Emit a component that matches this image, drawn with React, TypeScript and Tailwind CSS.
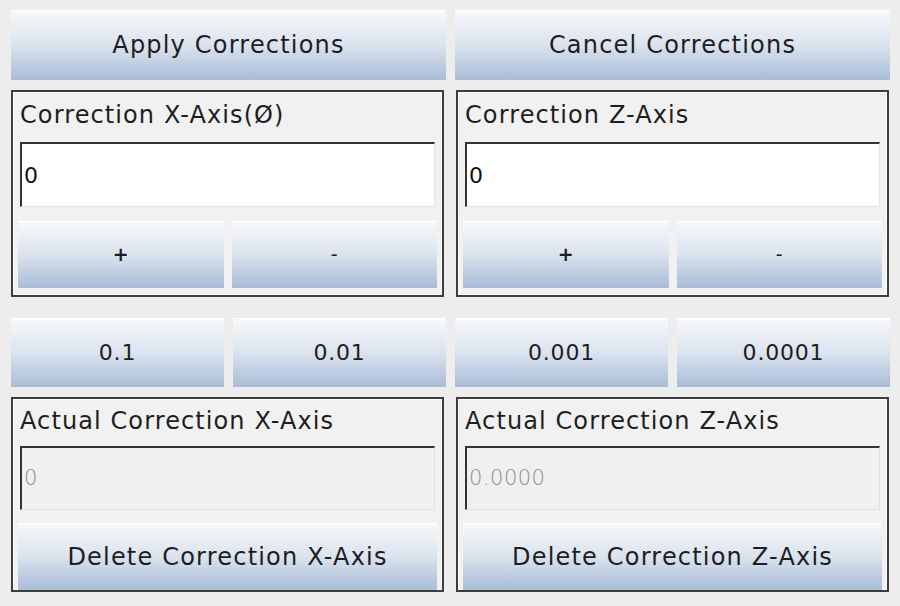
const font = "font-['DejaVu_Sans',sans-serif]";

const Btn = ({
  label,
  className = "",
  text = "text-[24px] tracking-[1.2px]",
}: {
  label: string;
  className?: string;
  text?: string;
}) => (
  <button
    className={`flex items-center justify-center bg-gradient-to-b from-[#f8f9fa] via-[#dbe3ee] to-[#a9bcd7] text-[#1e1e1e] ${text} shadow-[inset_0_1px_0_#fff] ${className}`}
  >
    {label}
  </button>
);

const Panel = ({ children, className = "" }: { children: React.ReactNode; className?: string }) => (
  <div
    className={`flex flex-col border-2 border-[#3d3d3d] bg-[#f1f1f1] shadow-[inset_1px_1px_0_#fff,inset_-1px_-1px_0_#fff] ${className}`}
  >
    {children}
  </div>
);

const CorrectionPanel = ({ title, className }: { title: string; className: string }) => (
  <Panel className={`h-[207px] ${className}`}>
    <div className="h-[44px] flex items-center pl-[7px] pt-[2px] text-[24px] tracking-[1.1px] text-[#1e1e1e]">{title}</div>
    <div className="mx-[7px] mt-[6px] h-[65px] flex items-center bg-white border-t-2 border-l-2 border-[#333] border-b border-r border-b-[#e4e4e4] border-r-[#e4e4e4] pl-[2px] text-[22px] text-[#111]">
      0
    </div>
    <div className="flex gap-[8px] mx-[5px] mt-[14px]">
      <Btn label="+" text="text-[19px] font-bold" className="flex-1 h-[67px]" />
      <Btn label="-" text="text-[19px]" className="flex-1 h-[67px]" />
    </div>
  </Panel>
);

const ActualPanel = ({ title, value, className }: { title: string; value: string; className: string }) => (
  <Panel className={`h-[195px] ${className}`}>
    <div className="h-[44px] flex items-center pl-[7px] pt-[2px] text-[24px] tracking-[1.1px] text-[#1e1e1e]">{title}</div>
    <div className="mx-[7px] mt-[4px] h-[66px] flex items-center bg-[#f0f0f0] border-t-2 border-l-2 border-[#333] border-b border-r border-b-[#e2e2e2] border-r-[#e2e2e2] pl-[2px] text-[21px] font-extralight tracking-[0.5px] text-[#8f8f8f]">
      {value}
    </div>
    <div className="mx-[5px] mt-[13px]">
      <Btn label={`Delete ${title.replace("Actual ", "")}`} className="w-full h-[67px]" />
    </div>
  </Panel>
);

export default function App() {
  return (
    <div className={`w-[900px] h-[606px] bg-[#ededed] pl-[11px] pr-[10px] pt-[10px] ${font}`}>
      <div className="grid grid-cols-2 gap-x-[9px]">
        <Btn label="Apply Corrections" className="h-[70px]" />
        <Btn label="Cancel Corrections" className="h-[70px]" />
      </div>
      <div className="grid grid-cols-2 gap-x-[9px] mt-[10px]">
        <CorrectionPanel title="Correction X-Axis(Ø)" className="mr-[2px]" />
        <CorrectionPanel title="Correction Z-Axis" className="mx-[1px]" />
      </div>
      <div className="grid grid-cols-4 gap-x-[9px] mt-[21px]">
        <Btn label="0.1" text="text-[22px] tracking-[0.8px]" className="h-[69px]" />
        <Btn label="0.01" text="text-[22px] tracking-[0.8px]" className="h-[69px]" />
        <Btn label="0.001" text="text-[22px] tracking-[0.8px]" className="h-[69px]" />
        <Btn label="0.0001" text="text-[22px] tracking-[0.8px]" className="h-[69px]" />
      </div>
      <div className="grid grid-cols-2 gap-x-[9px] mt-[10px]">
        <ActualPanel title="Actual Correction X-Axis" value="0" className="mr-[2px]" />
        <ActualPanel title="Actual Correction Z-Axis" value="0.0000" className="mx-[1px]" />
      </div>
    </div>
  );
}
